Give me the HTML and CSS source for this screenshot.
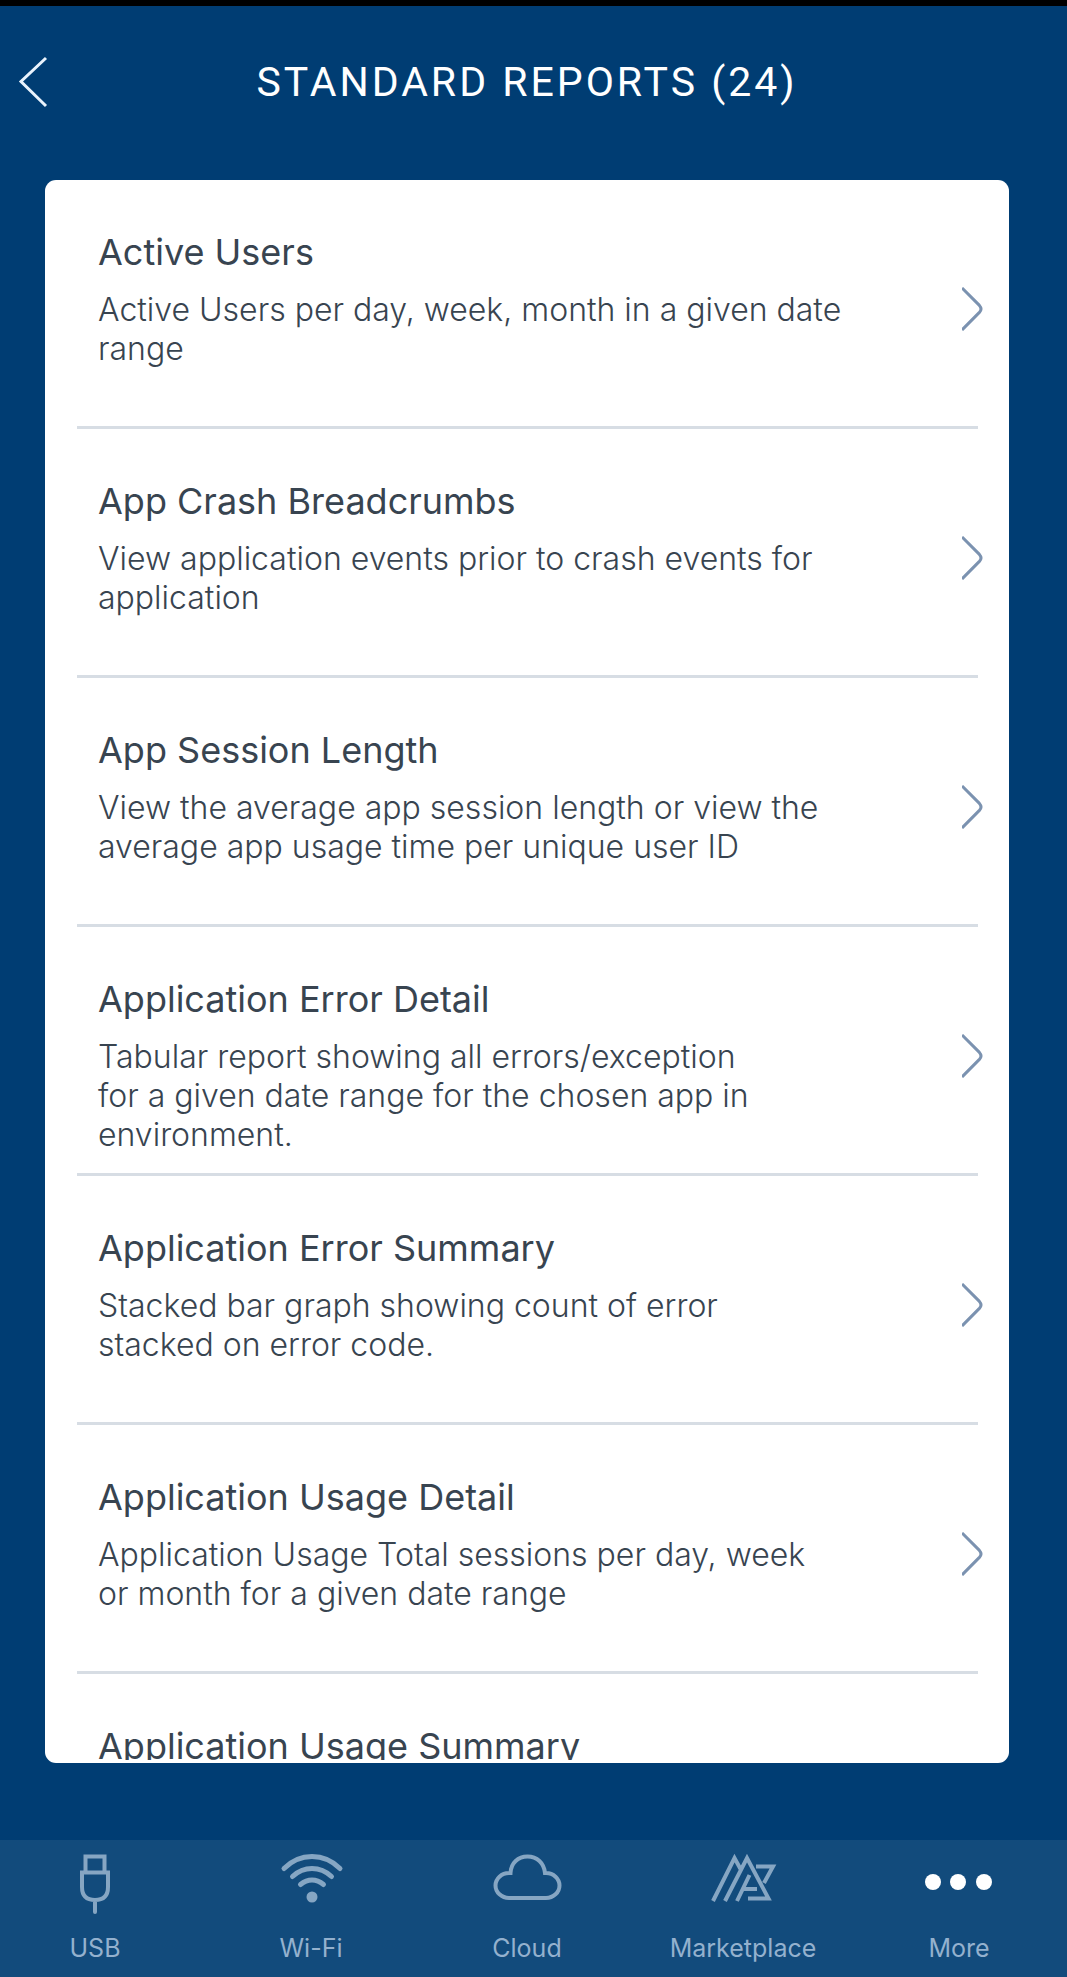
FILE: index.html
```
<!DOCTYPE html>
<html lang="en">
<head>
<meta charset="utf-8">
<meta name="viewport" content="width=device-width, initial-scale=1">
<title>Standard Reports</title>
<link rel="stylesheet" href="styles.css">
</head>
<body>
<svg class="defs" aria-hidden="true">
  <symbol id="chevron" viewBox="0 0 22 44"><path d="M0 1L17.400 18.400Q20.600 22 17.400 25.400L0 43"/></symbol>
</svg>
<header class="header">
  <button class="back" type="button" aria-label="Back">
    <svg width="30" height="52" viewBox="0 0 30 52"><path d="M28 2L3 25.500L28 50"/></svg>
  </button>
  <h1 class="title">STANDARD REPORTS (24)</h1>
</header>
<main class="card">
  <ul class="list">
    <li class="item"><a class="row" href="#active-users"><span class="text"><span class="name">Active Users</span><span class="desc">Active Users per day, week, month in a given date<br>range</span></span><svg class="chevron"><use href="#chevron"/></svg></a></li>
    <li class="item"><a class="row" href="#breadcrumbs"><span class="text"><span class="name">App Crash Breadcrumbs</span><span class="desc">View application events prior to crash events for<br>application</span></span><svg class="chevron"><use href="#chevron"/></svg></a></li>
    <li class="item"><a class="row" href="#session-length"><span class="text"><span class="name">App Session Length</span><span class="desc">View the average app session length or view the<br>average app usage time per unique user ID</span></span><svg class="chevron"><use href="#chevron"/></svg></a></li>
    <li class="item"><a class="row" href="#error-detail"><span class="text"><span class="name">Application Error Detail</span><span class="desc">Tabular report showing all errors/exception<br>for a given date range for the chosen app in<br>environment.</span></span><svg class="chevron"><use href="#chevron"/></svg></a></li>
    <li class="item"><a class="row" href="#error-summary"><span class="text"><span class="name">Application Error Summary</span><span class="desc">Stacked bar graph showing count of error<br>stacked on error code.</span></span><svg class="chevron"><use href="#chevron"/></svg></a></li>
    <li class="item"><a class="row" href="#usage-detail"><span class="text"><span class="name">Application Usage Detail</span><span class="desc">Application Usage Total sessions per day, week<br>or month for a given date range</span></span><svg class="chevron"><use href="#chevron"/></svg></a></li>
    <li class="item"><a class="row" href="#usage-summary"><span class="text"><span class="name">Application Usage Summary</span></span></a></li>
  </ul>
</main>
<nav class="tabs">
  <a class="tab" href="#usb">
    <svg class="icon" viewBox="0 0 72 64"><path d="M26.500 21V6.500H45.500V21M23 22.500H49V37Q49 50 36 50Q23 50 23 37ZM36 50V62"/></svg>
    <span>USB</span>
  </a>
  <a class="tab" href="#wifi">
    <svg class="icon wifi" viewBox="0 0 72 64"><path d="M9 18.500Q21 6.500 37 6.500Q53 6.500 65 18.500M17.500 26.500Q26 18.500 37 18.500Q48 18.500 56.500 26.500M25.500 34.500Q31 30 37 30Q43 30 48.500 34.500"/><circle class="dot" cx="37" cy="47" r="5.500"/></svg>
    <span>Wi-Fi</span>
  </a>
  <a class="tab" href="#cloud">
    <svg class="icon" viewBox="0 0 72 64"><path d="M18 48A13.500 12.500 0 0 1 18 23H19.500C20 13 27 6.500 36.500 6.500C46 6.500 53 13 54 23H55A13.500 12.500 0 0 1 55 48Z"/></svg>
    <span>Cloud</span>
  </a>
  <a class="tab" href="#marketplace">
    <svg class="icon mas" viewBox="0 0 72 64"><path d="M6 51L27.500 8L33.500 19M18 51L40 8L61.500 48.500H41M30 51L42.500 25M36 39H50M49 16.500H66L57 33"/></svg>
    <span>Marketplace</span>
  </a>
  <a class="tab" href="#more" aria-current="page">
    <svg class="icon dots" viewBox="0 0 72 64"><circle cx="10" cy="32" r="8"/><circle cx="35" cy="32" r="8"/><circle cx="61" cy="32" r="8"/></svg>
    <span>More</span>
  </a>
</nav>
</body>
</html>
```
FILE: styles.css
```
* { box-sizing: border-box; }
body {
  margin: 0;
  height: 100vh;
  display: flex;
  flex-direction: column;
  border-top: 6px solid #000;
  background: #003d73;
  color: #384450;
  font-family: Inter, "Liberation Sans", sans-serif;
}
.defs { display: none; }
a { color: inherit; text-decoration: none; }
svg { fill: none; flex: none; }

.header {
  height: 174px;
  flex: none;
  display: grid;
  grid-template-columns: 58px 1fr 71px;
  align-items: center;
  padding-bottom: 22px;
  color: #fff;
}
.back {
  padding: 0 0 0 18px;
  border: 0;
  background: none;
  line-height: 0;
  text-align: left;
}
.back svg { stroke: #e9f3fd; stroke-width: 3; }
.title {
  margin: 0;
  text-align: center;
  font: 400 41px/48px Roboto, sans-serif;
  letter-spacing: 3px;
}

.card {
  flex: 1;
  min-height: 0;
  display: flex;
  margin: 0 58px 77px 45px;
  padding-bottom: 3px;
  border-radius: 11px;
  background: #fff;
}
.list {
  flex: 1;
  margin: 0;
  padding: 0;
  list-style: none;
  overflow-y: auto;
  scrollbar-width: none;
}
.item::after {
  content: "";
  display: block;
  height: 3px;
  margin: 0 31px 0 32px;
  background: #d7dde4;
}
.row {
  min-height: 246px;
  display: flex;
  justify-content: space-between;
  padding: 12px 25px 0 53px;
}
.text {
  display: flex;
  flex-direction: column;
  gap: 16px;
  padding-top: 38px;
}
.name { font-size: 36px; line-height: 44px; }
.desc { font-size: 32px; line-height: 39px; font-weight: 300; }
.chevron {
  width: 22px;
  height: 44px;
  align-self: center;
  stroke: #7b92b0;
  stroke-width: 3;
}

.tabs {
  height: 137px;
  flex: none;
  display: flex;
  justify-content: space-between;
  padding: 10px 34px 0 21px;
  background: #124b7c;
  color: #94b1ce;
}
.tab {
  width: 148px;
  display: flex;
  flex-direction: column;
  align-items: center;
  gap: 20px;
  font-size: 25px;
  line-height: 28px;
}
.icon {
  width: 72px;
  height: 64px;
  stroke: #86a6c3;
  stroke-width: 4;
  stroke-linecap: round;
}
.wifi { stroke-width: 5; }
.wifi .dot { fill: #86a6c3; stroke: none; }
.mas { stroke-linecap: butt; }
.dots { fill: #fff; stroke: none; }
```
